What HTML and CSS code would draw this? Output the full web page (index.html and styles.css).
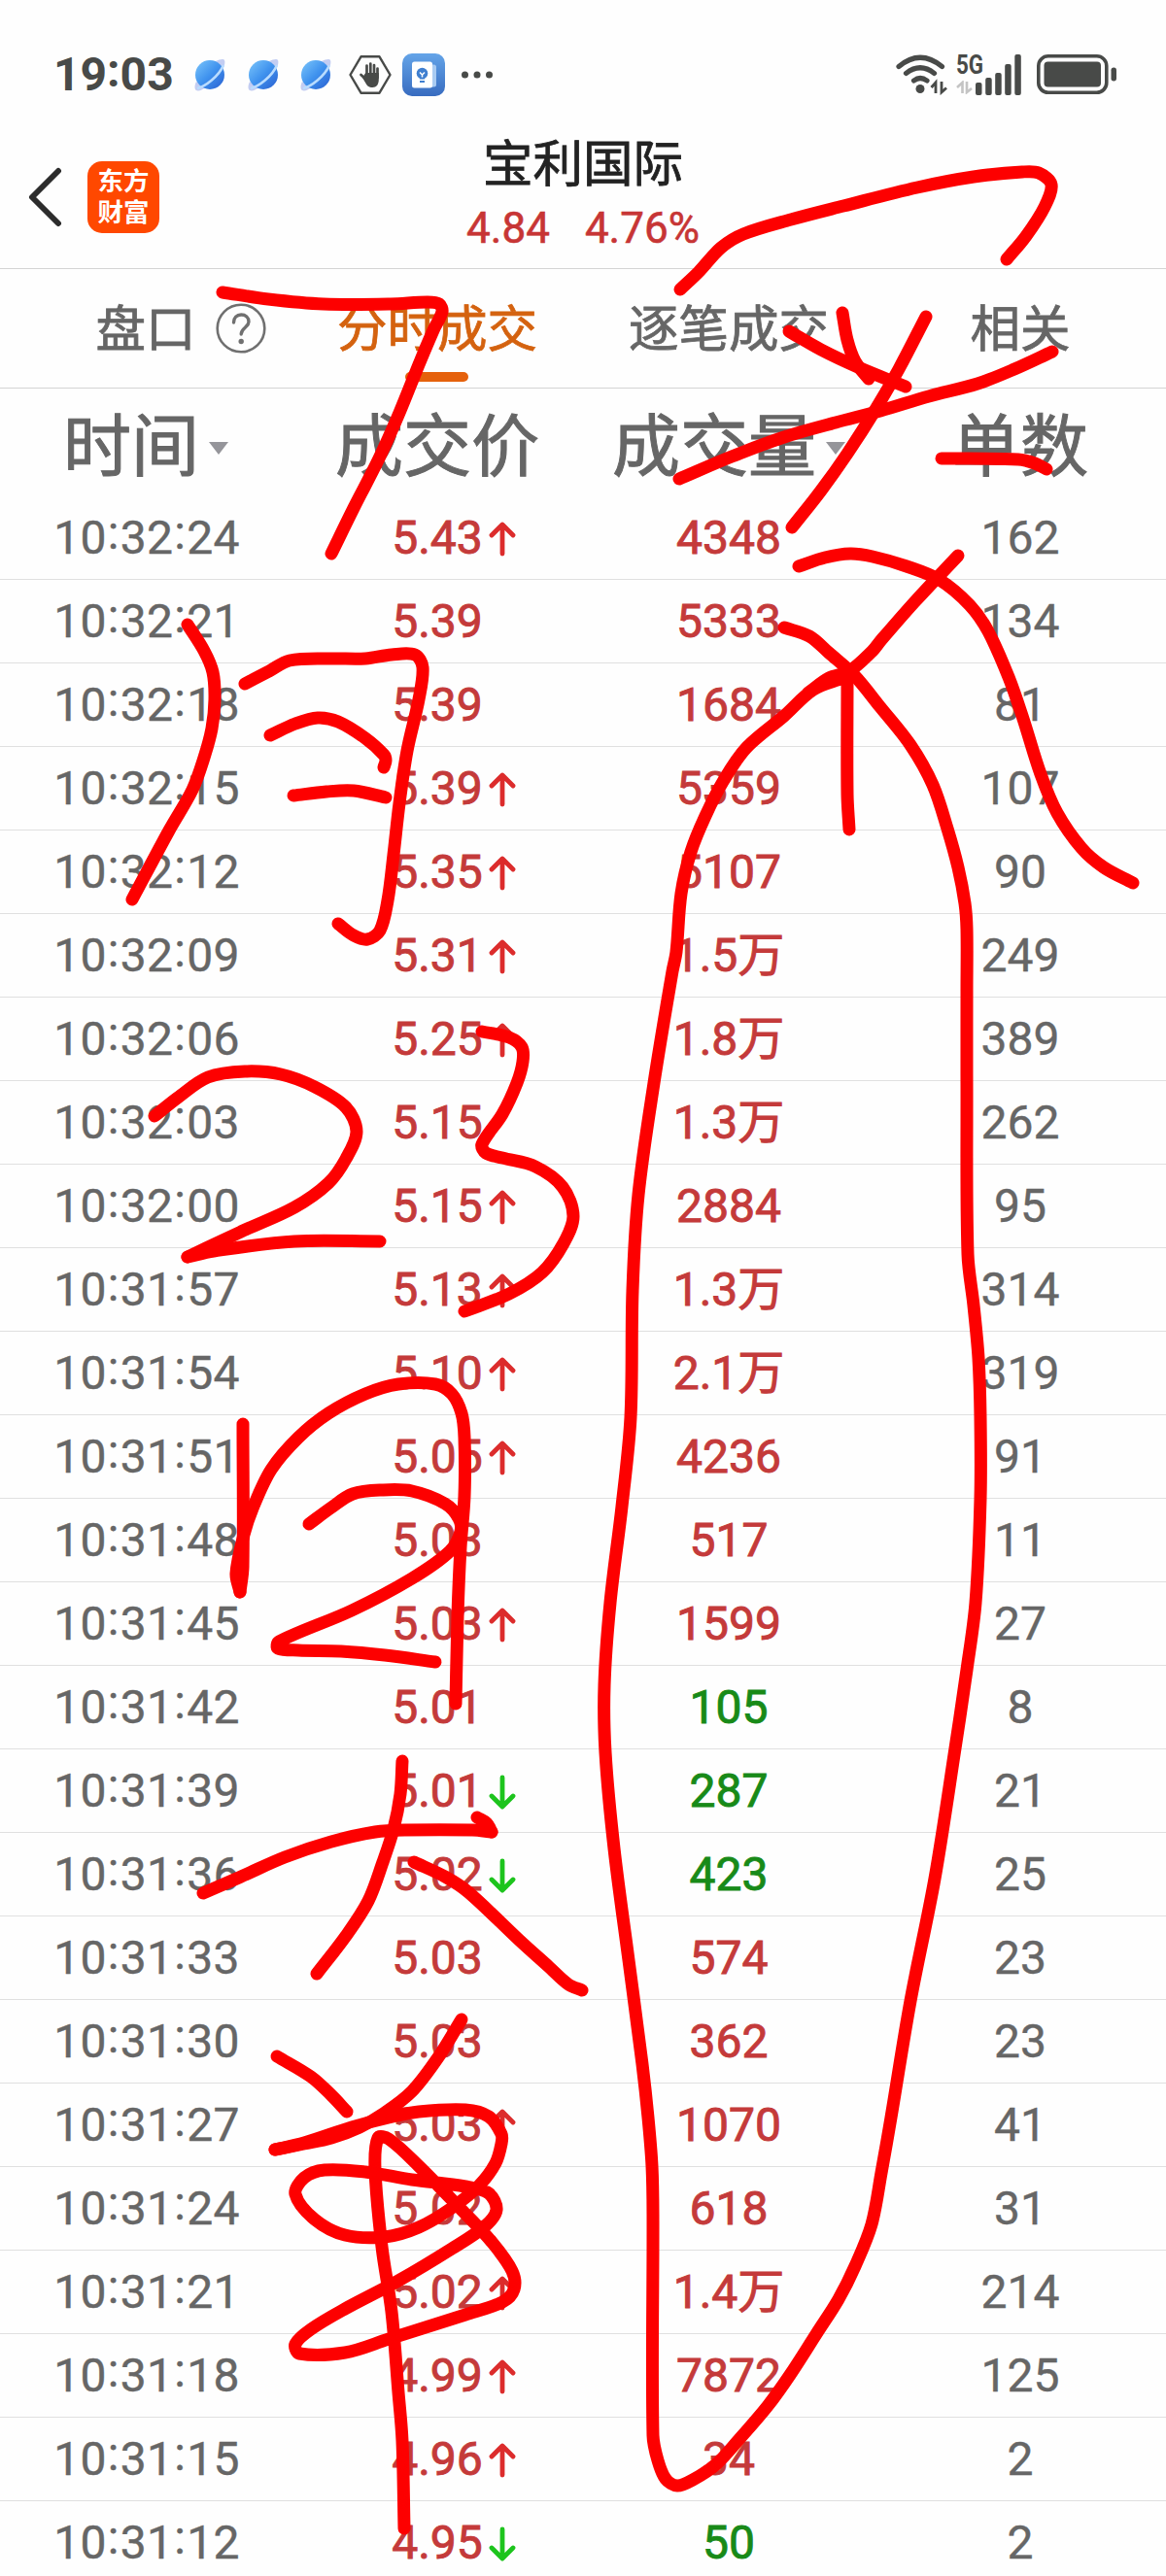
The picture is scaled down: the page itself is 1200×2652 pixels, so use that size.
FILE: index.html
```html
<!DOCTYPE html>
<html lang="zh-CN">

<head>
    <meta charset="UTF-8">
    <meta name="viewport" content="width=device-width, initial-scale=1.0">
    <title>宝利国际 - 分时成交</title>
    <link rel="stylesheet" href="styles.css">
</head>

<body>
    <div class="screen">
        <!-- Status bar -->
        <div class="status-bar">
            <div class="status-left">
                <span class="clock">19<i>:</i>03</span>
                <svg class="planet" viewBox="0 0 32 34">
                    <defs>
                        <linearGradient id="globe" x1="0" y1="0" x2="1" y2="1">
                            <stop offset="0" stop-color="#7cc6fb" />
                            <stop offset="0.5" stop-color="#3f92ee" />
                            <stop offset="1" stop-color="#2a5fd0" />
                        </linearGradient>
                    </defs>
                    <path d="M22 3c4-2 8-3 9-1s0 7-3 11zM2 24c-2 4-2 8 0 9s6 0 9-3z" fill="#c3cdf2" />
                    <circle cx="16" cy="17" r="15" fill="url(#globe)" />
                    <path d="M3 31c8-2 22-12 27-24" fill="none" stroke="#b9dcff" stroke-width="2.6" />
                </svg>
                <svg class="planet" viewBox="0 0 32 34">
                    <path d="M22 3c4-2 8-3 9-1s0 7-3 11zM2 24c-2 4-2 8 0 9s6 0 9-3z" fill="#c3cdf2" />
                    <circle cx="16" cy="17" r="15" fill="url(#globe)" />
                    <path d="M3 31c8-2 22-12 27-24" fill="none" stroke="#b9dcff" stroke-width="2.6" />
                </svg>
                <svg class="planet" viewBox="0 0 32 34">
                    <path d="M22 3c4-2 8-3 9-1s0 7-3 11zM2 24c-2 4-2 8 0 9s6 0 9-3z" fill="#c3cdf2" />
                    <circle cx="16" cy="17" r="15" fill="url(#globe)" />
                    <path d="M3 31c8-2 22-12 27-24" fill="none" stroke="#b9dcff" stroke-width="2.6" />
                </svg>
                <svg class="hand" viewBox="0 0 44 40">
                    <path d="M12.5 1.3h19L42.5 20l-11 18.700h-19L1.500 20z" fill="none" stroke="#484a48" stroke-width="2.400" stroke-linejoin="round" />
                    <path d="M18.500 21V10.500M22.300 20V8.500M26 21V10M29.500 23V13.500M18 25l-5.500-5" fill="none" stroke="#484a48" stroke-width="2.700" stroke-linecap="round" />
                    <path d="M17.200 18h13.600v7c0 5-2.500 8-6.300 8-4 0-6-2-7.500-5l-3-5z" fill="#484a48" />
                </svg>
                <svg class="app-badge" viewBox="0 0 44 44">
                    <defs>
                        <linearGradient id="badge" x1="0" y1="0" x2="0" y2="1">
                            <stop offset="0" stop-color="#64a4e8" />
                            <stop offset="1" stop-color="#386cc0" />
                        </linearGradient>
                    </defs>
                    <rect width="44" height="44" rx="10" fill="url(#badge)" />
                    <rect x="16" y="11.500" width="19" height="23" rx="2.500" fill="#a9cbf2" />
                    <rect x="10" y="8.500" width="21" height="27" rx="2.500" fill="#fff" />
                    <circle cx="20.500" cy="20.500" r="5.800" fill="#3f7fd0" />
                    <path d="M18 19.500l2.500 2.500 2.500-2.500M20.500 22v4" fill="none" stroke="#fff" stroke-width="1.500" />
                    <path d="M17.800 25.500h5.400M18 29h5" stroke="#3f7fd0" stroke-width="2" />
                </svg>
                <svg class="more" viewBox="0 0 32 8" fill="#484a48">
                    <circle cx="3.500" cy="4" r="3.500" />
                    <circle cx="16" cy="4" r="3.500" />
                    <circle cx="28.500" cy="4" r="3.500" />
                </svg>
            </div>
            <div class="status-right">
                <svg class="wifi" viewBox="0 0 54 42">
                    <g fill="none" stroke="#484a48" stroke-width="5.200" stroke-linecap="round">
                        <path d="M3 12.500Q25 -6 47.500 12.500" />
                        <path d="M10.500 19.500Q25 8 39.500 19.500" />
                        <path d="M18.500 27Q25 22 32 27" />
                    </g>
                    <circle cx="25" cy="35.500" r="4.500" fill="#484a48" />
                    <path d="M36.500 34l4.500-5v11M52 34.500l-5 4.500V28" fill="none" stroke="#484a48" stroke-width="2.800" />
                </svg>
                <div class="network">
                    <span>5G</span>
                    <svg viewBox="0 0 18 14"><path d="M1 7l5.500-5v11M16 8l-5 4V1" fill="none" stroke="#c4c4c4" stroke-width="2.600" /></svg>
                </div>
                <svg class="signal" viewBox="0 0 48 42" fill="#484a48">
                    <rect x="0" y="29" width="6.500" height="13" rx="2" />
                    <rect x="10.200" y="24" width="6.500" height="18" rx="2" />
                    <rect x="20.200" y="19" width="6.500" height="23" rx="2" />
                    <rect x="30.200" y="10" width="6.500" height="32" rx="2" />
                    <rect x="40.300" y="0" width="6.500" height="42" rx="2" />
                </svg>
                <svg class="battery" viewBox="0 0 84 42">
                    <rect x="1.800" y="1.800" width="70" height="37.500" rx="10" fill="none" stroke="#484a48" stroke-width="3.600" />
                    <rect x="7.500" y="7.500" width="58.500" height="26" rx="4" fill="#484a48" />
                    <rect x="76.500" y="13.500" width="5.500" height="14" rx="2.700" fill="#484a48" />
                </svg>
            </div>
        </div>

        <!-- Header -->
        <header class="header">
            <div class="header-left">
                <svg class="back" viewBox="0 0 36 62">
                    <path d="M32 4L5 31l27 27" fill="none" stroke="#2c2c2c" stroke-width="6" stroke-linecap="round" stroke-linejoin="round" />
                </svg>
                <div class="brand"><span>东方</span><span>财富</span></div>
            </div>
            <div class="stock">
                <h1>宝利国际</h1>
                <p class="quote"><span>4.84</span><span>4.76%</span></p>
            </div>
        </header>

        <!-- Tabs -->
        <nav class="tabs">
            <div class="tab">盘口
                <svg class="help" viewBox="0 0 52 52" fill="none" stroke="#707070">
                    <circle cx="26" cy="26" r="24.300" stroke-width="2.600" />
                    <path d="M18.500 20c0-5 3.200-8 7.700-8s7.800 3 7.800 7.200c0 5.800-7.800 6.300-7.800 12.800" stroke-width="3.400" stroke-linecap="round" />
                    <circle cx="26.200" cy="39.500" r="2.700" fill="#707070" stroke="none" />
                </svg>
            </div>
            <div class="tab active">分时成交</div>
            <div class="tab">逐笔成交</div>
            <div class="tab">相关</div>
        </nav>

        <!-- Trade list -->
        <div class="list-head">
            <div>时间<b class="caret"></b></div>
            <div>成交价</div>
            <div>成交量<b class="caret"></b></div>
            <div>单数</div>
        </div>
        <div class="list" id="list"></div>

        <svg class="ink" id="ink" viewBox="0 0 1200 2652"></svg>
    </div>

    <script src="script.js"></script>
</body>

</html>
```
FILE: styles.css
```css
/* General Styles */
* {
    margin: 0;
    padding: 0;
    box-sizing: border-box;
}

body {
    font-family: Roboto, 'Noto Sans CJK SC', sans-serif;
    background: #fefefe;
    color: #666;
}

.screen {
    position: relative;
    width: 1200px;
    height: 2652px;
    overflow: hidden;
}

svg {
    display: block;
    flex: none;
}

/* Status bar */
.status-bar {
    height: 126px;
    padding: 28px 49px 0 55px;
    display: flex;
    justify-content: space-between;
    align-items: center;
}

.status-left,
.status-right {
    display: flex;
    align-items: center;
}

.clock {
    width: 145px;
    font-size: 48px;
    font-weight: bold;
    line-height: 56px;
    color: #484a48;
}

.clock i {
    position: relative;
    top: -4px;
    font-style: normal;
}

.planet {
    width: 32px;
    height: 34px;
    margin-right: 22.500px;
}

.hand {
    width: 44px;
    height: 40px;
    margin: 0 11px 0 -5px;
}

.app-badge {
    width: 44px;
    height: 44px;
}

.more {
    width: 32px;
    height: 8px;
    margin-left: 17.500px;
}

.wifi {
    width: 54px;
    height: 42px;
    margin-right: 8px;
}

.network {
    width: 20px;
    height: 42px;
    color: #484a48;
    font-size: 27px;
    font-weight: bold;
    line-height: 22px;
}

.network span {
    display: block;
    width: 36px;
    transform: scaleX(0.830);
    transform-origin: left;
}

.network svg {
    width: 18px;
    height: 14px;
    margin-top: 5px;
}

.signal {
    width: 48px;
    height: 42px;
    margin-right: 15px;
}

.battery {
    width: 84px;
    height: 42px;
}

/* Header */
.header {
    position: relative;
    height: 151px;
    border-bottom: 1px solid #d4d4d4;
}

.header-left {
    position: absolute;
    left: 28px;
    top: 40px;
    display: flex;
    align-items: center;
}

.back {
    width: 36px;
    height: 62px;
}

.brand {
    width: 74px;
    height: 74px;
    margin-left: 26px;
    border-radius: 15px;
    background: #ff4800;
    color: #fff;
    font-size: 26.500px;
    font-weight: bold;
    line-height: 32px;
    text-align: center;
    padding-top: 5px;
}

.brand span {
    display: block;
}

.stock {
    text-align: center;
    padding-top: 14px;
}

.stock h1 {
    font-size: 51.500px;
    font-weight: 400;
    line-height: 60px;
    color: #222;
    -webkit-text-stroke: 0.8px;
}

.quote {
    display: flex;
    justify-content: center;
    gap: 36px;
    font-size: 44px;
    line-height: 52px;
    margin-top: 9px;
    color: #c73535;
    -webkit-text-stroke: 0.6px;
}

/* Tabs */
.tabs {
    height: 123px;
    display: grid;
    grid-template-columns: repeat(4, 1fr);
    border-bottom: 1px solid #d4d4d4;
}

.tab {
    position: relative;
    height: 122px;
    text-align: center;
    font-size: 51.500px;
    line-height: 125px;
    -webkit-text-stroke: 0.8px;
}

.tab.active {
    color: #d4620f;
}

.tab.active::after {
    content: '';
    position: absolute;
    left: 117px;
    bottom: 6px;
    width: 65px;
    height: 10px;
    border-radius: 5px;
    background: #e5610c;
}

.help {
    position: absolute;
    left: 222px;
    top: 35px;
    width: 52px;
    height: 52px;
}

/* Trade list */
.list-head {
    height: 111px;
    display: grid;
    grid-template-columns: repeat(4, 1fr);
    font-size: 70px;
    line-height: 111px;
    -webkit-text-stroke: 1px;
}

.list-head div {
    display: flex;
    justify-content: center;
    align-items: center;
    padding-top: 11px;
    height: 111px;
}

.caret {
    border: 10px solid transparent;
    border-top: 13px solid #95959a;
    border-bottom: 0;
    margin: 0 0 0 10px;
}

.row {
    height: 86px;
    display: grid;
    grid-template-columns: repeat(4, 1fr);
    border-bottom: 1px solid #e0e0e0;
    font-size: 48px;
    line-height: 86px;
    text-align: center;
    -webkit-text-stroke: 0.4px;
}

.row:last-child {
    border-bottom: 0;
}

.time {
    padding-left: 2px;
    letter-spacing: 0.200px;
}

.time i {
    position: relative;
    top: -5px;
    font-style: normal;
    letter-spacing: 1.500px;
    margin-left: 1px;
}

.price {
    position: relative;
}

.price,
.volume {
    color: #c43a3a;
    -webkit-text-stroke: 0.9px;
}

.volume.sell {
    color: #188a18;
}

.arrow {
    position: absolute;
    left: 203px;
    top: 26px;
    width: 28px;
    height: 36px;
    fill: none;
    stroke: #dc2c2c;
    stroke-width: 4.800;
    stroke-linecap: round;
    stroke-linejoin: round;
}

.arrow.down {
    stroke: #1dc41d;
    transform: rotate(180deg);
}

/* Handwriting layer */
.ink {
    position: absolute;
    left: 0;
    top: 0;
    width: 1200px;
    height: 2652px;
    fill: none;
    stroke: #fd0000;
    stroke-width: 13;
    stroke-linecap: round;
    stroke-linejoin: round;
}
```
FILE: script.js
```js
// time, price, direction, volume, count, side
const trades = [
    ["10:32:24", "5.43", "up", "4348", 162],
    ["10:32:21", "5.39", "", "5333", 134],
    ["10:32:18", "5.39", "", "1684", 81],
    ["10:32:15", "5.39", "up", "5359", 107],
    ["10:32:12", "5.35", "up", "5107", 90],
    ["10:32:09", "5.31", "up", "1.5万", 249],
    ["10:32:06", "5.25", "up", "1.8万", 389],
    ["10:32:03", "5.15", "", "1.3万", 262],
    ["10:32:00", "5.15", "up", "2884", 95],
    ["10:31:57", "5.13", "up", "1.3万", 314],
    ["10:31:54", "5.10", "up", "2.1万", 319],
    ["10:31:51", "5.05", "up", "4236", 91],
    ["10:31:48", "5.03", "", "517", 11],
    ["10:31:45", "5.03", "up", "1599", 27],
    ["10:31:42", "5.01", "", "105", 8, "sell"],
    ["10:31:39", "5.01", "down", "287", 21, "sell"],
    ["10:31:36", "5.02", "down", "423", 25, "sell"],
    ["10:31:33", "5.03", "", "574", 23],
    ["10:31:30", "5.03", "", "362", 23],
    ["10:31:27", "5.03", "up", "1070", 41],
    ["10:31:24", "5.02", "", "618", 31],
    ["10:31:21", "5.02", "up", "1.4万", 214],
    ["10:31:18", "4.99", "up", "7872", 125],
    ["10:31:15", "4.96", "up", "34", 2],
    ["10:31:12", "4.95", "down", "50", 2, "sell"]
];

document.getElementById("list").innerHTML = trades.map(([time, price, dir, volume, count, side]) => `
    <div class="row">
        <div class="time">${time.replace(/:/g, "<i>:</i>")}</div>
        <div class="price">${price}${dir ? `<svg class="arrow ${dir}" viewBox="0 0 28 36"><path d="M14 33V4M3 14L14 3l11 11"/></svg>` : ""}</div>
        <div class="volume ${side || ""}">${volume}</div>
        <div class="count">${count}</div>
    </div>
`).join("");

// pen strokes, each a list of x,y points
const strokes = [
    "700,298 719,280 742,255 765,241 814,226 868,212 944,193 1002,182 1052,177 1069,178 1082,190 1075,213 1056,243 1036,267",
    "229,301 276,308 333,313 402,313 440,311 452,313 455,321 446,340 432,373 411,425 390,472 364,523 341,570",
    "867,322 872,350 880,372 894,390",
    "812,341 845,360 883,378 932,398",
    "953,326 925,380 902,420 872,467 845,505 815,543",
    "699,493 753,470 807,450 860,435 906,423 956,408 1006,395 1044,380 1083,362",
    "969,472 1048,473 1065,477 1077,483",
    "822,583 849,574 875,570 898,573 933,583 967,597 998,623 1017,650 1038,697 1053,740 1071,797 1088,837 1113,873 1136,893 1166,909",
    "986,572 941,620 906,660 898,670 874,691 853,698 832,713",
    "807,646 833,655 853,672 879,695 906,728 937,767 960,808 975,853 986,893 993,930 995,957 995,1020 995,1115 996,1291 1002,1344 1007,1398 1009,1459 1009,1543 1004,1650 995,1719 983,1800 962,1934 937,2060 917,2180 907,2237 897,2290 880,2333 863,2367 840,2403 813,2445 790,2477 760,2512 737,2537 713,2553 697,2559 685,2552 677,2533 672,2507 672,2280 671,2230 667,2180 661,2125 647,2018 632,1903 623,1804 622,1735 628,1650 640,1551 649,1459 651,1329 657,1230 673,1115 692,1000 696,980 701,920 711,877 726,840 745,803 768,770 807,737 837,710 868,698",
    "872,698 872,817 874,854",
    "193,643 210,670 219,692 221,720 218,750 210,780 198,813 174,855 136,926",
    "252,704 277,691 298,680 340,678 376,678 403,674 427,674 435,687 431,720 419,773 411,827 405,880 399,927 391,958 378,967 364,963 348,951",
    "278,757 304,745 327,739 348,743 376,760 395,777 397,783 395,790",
    "302,819 336,815 364,814 397,821",
    "159,1149 183,1130 214,1109 252,1103 289,1106 324,1119 356,1140 367,1165 356,1193 338,1218 303,1243 248,1268 193,1294",
    "193,1294 220,1288 303,1278 391,1278",
    "496,1062 524,1068 537,1078 538,1093 532,1115 517,1147 496,1178 500,1187 517,1192 551,1201 579,1222 590,1252 580,1280 558,1310 524,1332 478,1350",
    "250,1466 250,1613 247,1639",
    "247,1639 243,1620 251,1580 260,1553 279,1513 307,1480 338,1455 376,1435 410,1425 448,1425 465,1435 475,1455 478,1480 478,1540 474,1593 471,1663 469,1754",
    "318,1569 341,1552 363,1538 393,1534 424,1535 458,1548 472,1563 474,1577 463,1597 424,1625 362,1658 287,1690 286,1697 307,1699 351,1700 396,1704 448,1711",
    "209,1949 248,1932 293,1912 341,1896 386,1886 417,1884 486,1884 506,1886",
    "506,1886 501,1877 491,1871",
    "414,1813 412,1847 405,1883 394,1917 379,1957 356,1993 326,2032",
    "426,1917 458,1932 482,1948 534,1997 565,2025 585,2043 599,2049",
    "285,2117 320,2138 341,2157 357,2174",
    "475,2079 451,2118 424,2153 396,2175 370,2190 341,2201 313,2207 283,2213",
    "283,2213 313,2206 362,2190 400,2180 431,2174 479,2172 503,2179 516,2197 516,2207 510,2227 493,2250 465,2273 431,2293 396,2303 355,2301 324,2285 304,2259 313,2242 334,2234 376,2236 424,2244 479,2251 503,2258 511,2275 499,2292 465,2315 410,2348 355,2377 320,2398 304,2413 308,2423 355,2422 400,2408 479,2383 517,2370 529,2357 527,2338 506,2308 475,2275 431,2230 400,2202 389,2201 386,2233 393,2313 403,2380 410,2463 414,2513 416,2603"
];

// smooth curve through all the points of a stroke
function strokePath(points) {
    const p = points.split(" ").map(pair => pair.split(",").map(Number));
    let d = `M${p[0]}`;
    for (let i = 0; i < p.length - 1; i++) {
        const a = p[i - 1] || p[i];
        const b = p[i];
        const c = p[i + 1];
        const e = p[i + 2] || c;
        // share out the handle length so short segments don't overshoot
        const len = Math.hypot(c[0] - b[0], c[1] - b[1]);
        const k1 = len / (len + Math.hypot(b[0] - a[0], b[1] - a[1])) / 1.5;
        const k2 = len / (len + Math.hypot(e[0] - c[0], e[1] - c[1])) / 1.5;
        d += `C${b[0] + (c[0] - a[0]) * k1 / 2} ${b[1] + (c[1] - a[1]) * k1 / 2} ${c[0] - (e[0] - b[0]) * k2 / 2} ${c[1] - (e[1] - b[1]) * k2 / 2} ${c}`;
    }
    return d;
}

document.getElementById("ink").innerHTML = strokes.map(s => `<path d="${strokePath(s)}"/>`).join("");
```
